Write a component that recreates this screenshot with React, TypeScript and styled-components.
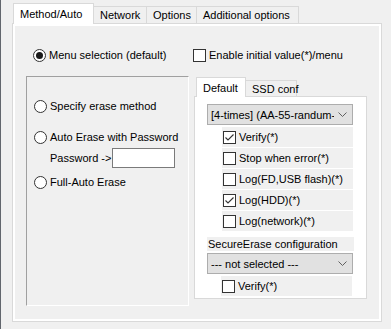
import React from "react";
import styled, { createGlobalStyle } from "styled-components";

const GlobalStyle = createGlobalStyle`
	html, body {
		margin: 0;
		padding: 0;
		background: #f0f0f0;
	}
	body {
		font-family: "Liberation Sans", Arial, sans-serif;
		font-size: 11px;
		color: #000;
	}
`;

const Window = styled.div`
	width: 391px;
	height: 329px;
	box-sizing: border-box;
	border-left: 1px solid #62666d;
	padding: 3px 0 0 11px;
	background: #f0f0f0;
	overflow: hidden;
`;

const TabStrip = styled.div<{ $h: number }>`
	display: flex;
	align-items: flex-end;
	height: ${(p) => p.$h}px;
	margin-left: 1px;
	position: relative;
	z-index: 1;
`;

const Tab = styled.div<{ $w: number; $active?: boolean; $h: number }>`
	box-sizing: border-box;
	width: ${(p) => p.$w}px;
	height: ${(p) => (p.$active ? p.$h + 1 : p.$h - 3)}px;
	margin-bottom: ${(p) => (p.$active ? -1 : 0)}px;
	margin-left: ${(p) => (p.$active ? 0 : -1)}px;
	border: 1px solid #d9d9d9;
	border-bottom: none;
	background: ${(p) => (p.$active ? "#fff" : "#f0f0f0")};
	display: flex;
	align-items: center;
	padding-left: 6px;
	white-space: nowrap;
	&:first-child {
		margin-left: 0;
	}
`;

const Panel = styled.div`
	box-sizing: border-box;
	width: 370px;
	height: 299px;
	border: 1px solid #d9d9d9;
	background: #fff;
	padding: 2px;
`;

const Page = styled.div`
	height: 100%;
	background: #f0f0f0;
	padding: 22px 0 0 11px;
	box-sizing: border-box;
`;

const TopRow = styled.div`
	display: grid;
	grid-template-columns: 160px auto;
	align-items: center;
	height: 14px;
	padding-left: 7px;
`;

const Option = styled.label`
	display: flex;
	align-items: center;
	gap: 3px;
	height: 14px;
	white-space: nowrap;
`;

const RadioDot = styled.span<{ $on?: boolean }>`
	box-sizing: border-box;
	width: 13px;
	height: 13px;
	border-radius: 50%;
	border: 1px solid #333;
	background: #fff;
	display: flex;
	align-items: center;
	justify-content: center;
	flex: none;
	&::after {
		content: "";
		display: ${(p) => (p.$on ? "block" : "none")};
		width: 7px;
		height: 7px;
		border-radius: 50%;
		background: #1a1a1a;
	}
`;

const Box = styled.span`
	box-sizing: border-box;
	width: 13px;
	height: 13px;
	border: 1px solid #333;
	background: #fff;
	flex: none;
	display: flex;
`;

const BodyRow = styled.div`
	display: flex;
	gap: 5px;
	margin-top: 14px;
	align-items: flex-start;
`;

const GroupBox = styled.div`
	box-sizing: border-box;
	width: 163px;
	height: 230px;
	border: 1px solid;
	border-color: #a0a0a0 #fff #fff #a0a0a0;
	padding: 22px 0 0 7px;
	display: flex;
	flex-direction: column;
`;

const Spaced = styled.div<{ $top: number }>`
	margin-top: ${(p) => p.$top}px;
`;

const PasswordRow = styled.div`
	display: flex;
	align-items: center;
	height: 20px;
	margin: 4px 0 0 16px;
	gap: 1px;
`;

const TextInput = styled.div`
	box-sizing: border-box;
	width: 63px;
	height: 20px;
	border: 1px solid #7a7a7a;
	background: #fff;
`;

const InnerTabs = styled.div`
	margin-top: 1px;
	margin-left: 1px;
`;

const InnerPanel = styled.div`
	box-sizing: border-box;
	width: 173px;
	height: 203px;
	border: 1px solid #d9d9d9;
	background: #fff;
	padding: 7px 0 0 12px;
	margin-left: -1px;
`;

const Combo = styled.div<{ $top?: number }>`
	box-sizing: border-box;
	width: 146px;
	height: 21px;
	border: 1px solid #adadad;
	background: #e1e1e1;
	display: flex;
	align-items: center;
	padding: 0 5px 0 3px;
	gap: 4px;
	margin-top: ${(p) => p.$top ?? 0}px;
`;

const ComboText = styled.span`
	flex: 1;
	overflow: hidden;
	white-space: nowrap;
`;

const CheckList = styled.div<{ $left: number }>`
	display: flex;
	flex-direction: column;
	gap: 1px;
	margin: 2px 0 0 ${(p) => p.$left}px;
`;

const CheckRow = styled.div`
	box-sizing: border-box;
	width: 131px;
	height: 20px;
	background: #f0f0f0;
	display: flex;
	align-items: center;
	gap: 3px;
	padding-left: 1px;
	white-space: nowrap;
`;

const SectionLabel = styled.div`
	width: 147px;
	height: 14px;
	margin-top: 6px;
	background: #f0f0f0;
	display: flex;
	align-items: center;
	padding-left: 1px;
	box-sizing: border-box;
`;

const Chevron = () => (
	<svg width="9" height="5" viewBox="0 0 9 5">
		<path d="M0.5 0.5 L4.5 4.5 L8.5 0.5" fill="none" stroke="#606060" strokeWidth="1" />
	</svg>
);

const Tick = () => (
	<svg width="11" height="11" viewBox="0 0 11 11">
		<path d="M1.5 5.5 L4 8 L9.5 2.5" fill="none" stroke="#333" strokeWidth="1.1" />
	</svg>
);

const Radio = ({ on, label }: { on?: boolean; label: string }) => (
	<Option>
		<RadioDot $on={on} />
		<span>{label}</span>
	</Option>
);

const Check = ({ on, label }: { on?: boolean; label: string }) => (
	<CheckRow>
		<Box>{on && <Tick />}</Box>
		<span>{label}</span>
	</CheckRow>
);

const mainTabs = [
	{ label: "Method/Auto", w: 81 },
	{ label: "Network", w: 54 },
	{ label: "Options", w: 51 },
	{ label: "Additional options", w: 103 },
];

const checks = [
	{ label: "Verify(*)", on: true },
	{ label: "Stop when error(*)", on: false },
	{ label: "Log(FD,USB flash)(*)", on: false },
	{ label: "Log(HDD)(*)", on: true },
	{ label: "Log(network)(*)", on: false },
];

export default function App() {
	return (
		<>
			<GlobalStyle />
			<Window>
				<TabStrip $h={20}>
					{mainTabs.map((t, i) => (
						<Tab key={t.label} $w={t.w} $h={20} $active={i === 0}>
							{t.label}
						</Tab>
					))}
				</TabStrip>
				<Panel>
					<Page>
						<TopRow>
							<Radio on label="Menu selection (default)" />
							<Option>
								<Box />
								<span>Enable initial value(*)/menu</span>
							</Option>
						</TopRow>
						<BodyRow>
							<GroupBox>
								<Radio label="Specify erase method" />
								<Spaced $top={17}>
									<Radio label="Auto Erase with Password" />
								</Spaced>
								<PasswordRow>
									<span>Password -&gt;</span>
									<TextInput />
								</PasswordRow>
								<Spaced $top={7}>
									<Radio label="Full-Auto Erase" />
								</Spaced>
							</GroupBox>
							<InnerTabs>
								<TabStrip $h={19}>
									<Tab $w={50} $h={19} $active>
										Default
									</Tab>
									<Tab $w={52} $h={19}>
										SSD conf
									</Tab>
								</TabStrip>
								<InnerPanel>
									<Combo>
										<ComboText>[4-times] (AA-55-randum-</ComboText>
										<Chevron />
									</Combo>
									<CheckList $left={15}>
										{checks.map((c) => (
											<Check key={c.label} on={c.on} label={c.label} />
										))}
									</CheckList>
									<SectionLabel>SecureErase configuration</SectionLabel>
									<Combo $top={2}>
										<ComboText>--- not selected ---</ComboText>
										<Chevron />
									</Combo>
									<CheckList $left={14}>
										<Check label="Verify(*)" />
									</CheckList>
								</InnerPanel>
							</InnerTabs>
						</BodyRow>
					</Page>
				</Panel>
			</Window>
		</>
	);
}
